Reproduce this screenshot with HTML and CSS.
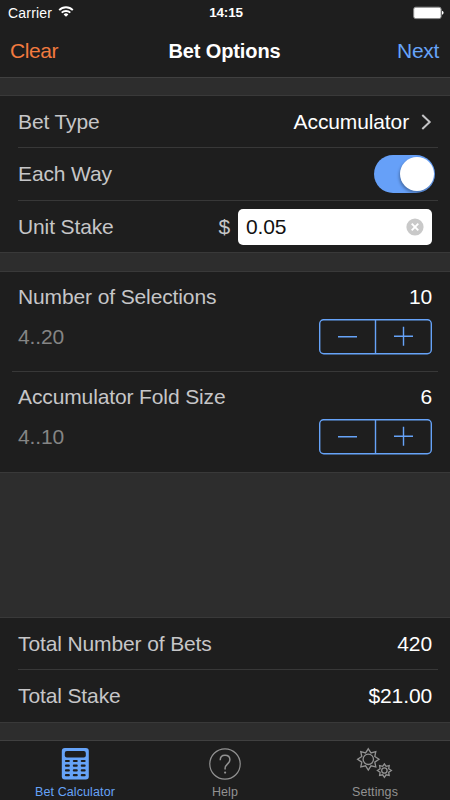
FILE: index.html
```html
<!DOCTYPE html>
<html lang="en">
<head>
<meta charset="utf-8">
<title>Bet Options</title>
<link rel="stylesheet" href="styles.css">
</head>
<body>
<div class="app">
  <header class="header">
    <div class="status">
      <div class="carrier"><span>Carrier</span>
        <svg width="16" height="13" viewBox="0 0 16 13" fill="none" stroke="#fff" stroke-width="1.9"><path d="M1.2 5.1a9.6 9.6 0 0 1 13.6 0M3.7 7.7a6.1 6.1 0 0 1 8.6 0"/><path d="M8 11.8L5.6 9.4a3.4 3.4 0 0 1 4.8 0z" fill="#fff" stroke="none"/></svg>
      </div>
      <time class="clock">14:15</time>
      <svg class="battery" width="31" height="14" viewBox="0 0 31 14"><rect x=".7" y="1.2" width="27.4" height="11.4" rx="2" fill="#fff" stroke="#8c8c8c"/><path d="M29 4.8q1.6.3 1.6 2t-1.6 2z" fill="#fff"/></svg>
    </div>
    <nav class="nav">
      <a class="clear">Clear</a>
      <h1>Bet Options</h1>
      <a class="next">Next</a>
    </nav>
  </header>

  <section class="group">
    <div class="row">
      <span>Bet Type</span>
      <span class="value choice">Accumulator<svg width="12" height="18" viewBox="0 0 12 18" fill="none" stroke="#c4c4c6" stroke-width="2"><path d="M2.3 2l7.4 7-7.4 7"/></svg></span>
    </div>
    <div class="row">
      <span>Each Way</span>
      <span class="switch"><span class="knob"></span></span>
    </div>
    <div class="row stake">
      <span>Unit Stake</span>
      <span class="entry"><span>$</span><span class="field"><span>0.05</span><svg width="18" height="18" viewBox="0 0 18 18"><circle cx="9" cy="9" r="8.6" fill="#c9c9c9"/><path d="M5.7 5.7l6.6 6.6M12.3 5.7l-6.6 6.6" stroke="#fff" stroke-width="1.9"/></svg></span></span>
    </div>
  </section>

  <section class="group selections">
    <div class="block">
      <div class="line"><span>Number of Selections</span><span class="value">10</span></div>
      <div class="line control"><span class="range">4..20</span>
        <svg width="113" height="36" viewBox="0 0 113 36" fill="none" stroke="#66a3f8" stroke-width="1.4"><rect x=".7" y=".7" width="111.6" height="34.1" rx="4"/><path d="M56.5 1v34M19 17.8h19M75 17.2h19M84.5 7.7v19"/></svg></div>
    </div>
    <div class="block">
      <div class="line"><span>Accumulator Fold Size</span><span class="value">6</span></div>
      <div class="line control"><span class="range">4..10</span>
        <svg width="113" height="36" viewBox="0 0 113 36" fill="none" stroke="#66a3f8" stroke-width="1.4"><rect x=".7" y=".7" width="111.6" height="34.1" rx="4"/><path d="M56.5 1v34M19 17.8h19M75 17.2h19M84.5 7.7v19"/></svg></div>
    </div>
  </section>

  <section class="group totals">
    <div class="row"><span>Total Number of Bets</span><span class="value">420</span></div>
    <div class="row"><span>Total Stake</span><span class="value">$21.00</span></div>
  </section>

  <footer class="tabs">
    <a class="tab active">
      <svg width="36" height="34" viewBox="0 0 36 34"><rect x="4.8" y="1" width="27" height="31.5" rx="3" fill="#66a3f8"/><rect x="7.8" y="4" width="21" height="6.5" rx="2" fill="#1e1e1e"/><path d="M9 14h2.8M16.9 14h2.8M24.8 14h2.8M9 18.7h2.8M16.9 18.7h2.8M24.8 18.7h2.8M9 23.4h2.8M16.9 23.4h2.8M24.8 23.4h2.8M9 28.2h2.8M16.9 28.2h2.8M24.8 28.2h2.8" stroke="#1e1e1e" stroke-width="2.2" stroke-linecap="round"/></svg>
      <span>Bet Calculator</span>
    </a>
    <a class="tab">
      <svg width="34" height="34" viewBox="0 0 34 34" fill="none" stroke="#929292" stroke-width="1.2"><circle cx="17" cy="17" r="15.2"/><path d="M12.2 13.2c0-3.2 1.9-5 4.8-5s4.9 1.8 4.9 4.5c0 4-4.8 4.3-4.8 8.6v1.2" stroke-width="1.5"/><circle cx="17.1" cy="25.6" r="1.1" fill="#929292" stroke="none"/></svg>
      <span>Help</span>
    </a>
    <a class="tab">
      <svg width="40" height="34" viewBox="0 0 40 34" fill="none" stroke="#929292" stroke-width="1.3"><path d="M13.3 1.8l2.7 4.1 4.8-1.2-1 4.8 4.2 2.8-4.2 2.8 1 4.8-4.8-1.1-2.7 4.2-2.7-4.2-4.8 1.1 1-4.8-4.2-2.8 4.2-2.8-1-4.8 4.8 1.2z"/><circle cx="13.3" cy="12.3" r="5.2"/><path d="M29.4 16.8l1.7 2.5 3.1-.7-.5 3.1 2.7 1.8-2.7 1.8.5 3.1-3.1-.6-1.7 2.5-1.7-2.5-3.1.6.5-3.1-2.7-1.8 2.7-1.8-.5-3.1 3.1.7z"/><circle cx="29.4" cy="23.5" r="2.7"/></svg>
      <span>Settings</span>
    </a>
  </footer>
</div>
</body>
</html>
```
FILE: styles.css
```css
* { box-sizing: border-box; }

body {
  margin: 0;
  background: #2d2d2d;
  color: #c6c6c8;
  font-family: "Liberation Sans", Arial, sans-serif;
  font-size: 21px;
  line-height: 24px;
  letter-spacing: -0.12px;
}

svg { display: block; flex: none; }

.app {
  display: flex;
  flex-direction: column;
  width: 450px;
  height: 800px;
  overflow: hidden;
}

.header {
  height: 78px;
  background: #1e1e1e;
  border-bottom: 1px solid #404040;
}

.status {
  display: grid;
  grid-template-columns: 1fr auto 1fr;
  align-items: center;
  height: 26px;
  padding: 0 6px 0 8px;
  color: #fff;
  font-size: 14px;
  line-height: 16px;
}

.carrier { display: flex; gap: 6px; letter-spacing: 0.2px; }
.clock { font-weight: bold; font-size: 13.5px; letter-spacing: -0.2px; }
.battery { justify-self: end; }

.nav {
  display: grid;
  grid-template-columns: 1fr auto 1fr;
  align-items: center;
  height: 50px;
  padding: 0 11px 0 10px;
}

.nav h1 {
  margin: 0;
  color: #fff;
  font-size: 20px;
  line-height: 24px;
}

.clear { color: #f27a3f; letter-spacing: -0.4px; }
.next { color: #66a3f8; text-align: right; letter-spacing: -0.3px; }

.group {
  margin-top: 17px;
  padding: 0 12px 0 18px;
  background: #1e1e1e;
  border: solid #393939;
  border-width: 1px 0;
}

.row {
  display: flex;
  align-items: center;
  justify-content: space-between;
  height: 53px;
  padding: 0 6px 0 0;
  border-bottom: 1px solid #383838;
}

.row:first-child { height: 52px; }
.row:last-child { height: 51px; border-bottom: 0; }

.value { color: #fff; }
.choice { display: flex; align-items: center; gap: 11px; }

.switch {
  width: 61px;
  height: 38px;
  margin-right: -3px;
  padding: 2px 1px;
  border-radius: 19px;
  background: #66a0f8;
}

.knob {
  display: block;
  width: 34px;
  height: 34px;
  margin-left: auto;
  border-radius: 50%;
  background: #fff;
  box-shadow: -1px 2px 3px rgb(0 0 0 / 30%);
}

.entry { display: flex; align-items: center; gap: 8px; }

.field {
  display: flex;
  align-items: center;
  justify-content: space-between;
  width: 194px;
  height: 36px;
  padding: 0 8px;
  border-radius: 5px;
  background: #fff;
  color: #111;
}

.selections { margin-top: 18px; padding-left: 12px; }

.block {
  height: 100px;
  padding: 13px 6px 0;
  border-bottom: 1px solid #383838;
}

.block:last-child { border-bottom: 0; }
.line { display: flex; align-items: center; justify-content: space-between; }
.control { height: 36px; margin-top: 10px; }
.range { color: #858585; }

.totals { margin-top: auto; }
.totals .row:last-child { height: 52px; }

.tabs {
  display: grid;
  grid-template-columns: repeat(3, 1fr);
  height: 60px;
  margin-top: 17px;
  background: #1e1e1e;
  border-top: 1px solid #404040;
}

.tab {
  display: flex;
  flex-direction: column;
  align-items: center;
  padding-top: 6px;
  color: #929292;
  font-size: 12.5px;
  line-height: 16px;
  letter-spacing: 0.1px;
}

.tab span { margin-top: 3px; }
.active { color: #66a3f8; }
```
